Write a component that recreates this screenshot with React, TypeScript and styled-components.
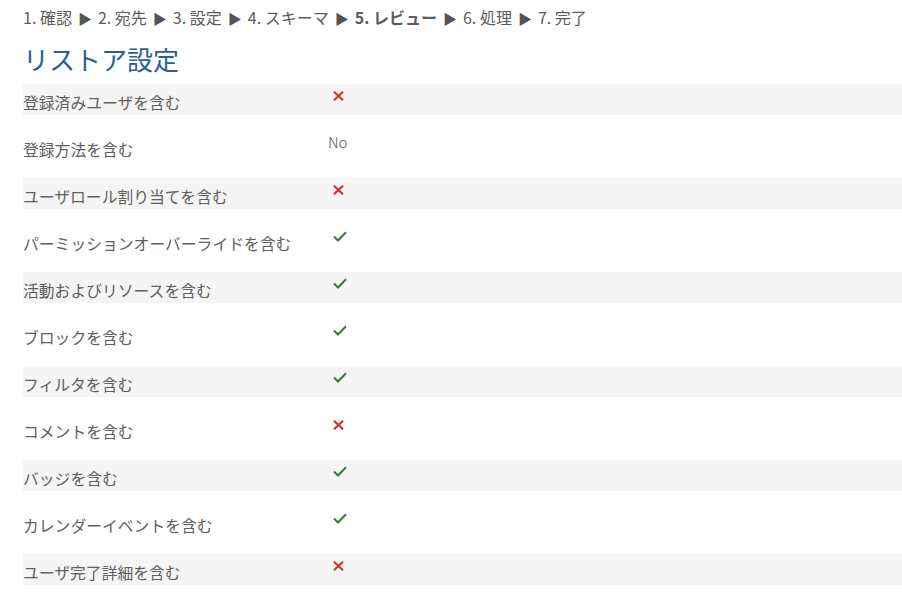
import React from 'react';
import styled, { createGlobalStyle } from 'styled-components';

type Value = 'yes' | 'no' | 'text';

interface Setting {
  label: string;
  value: Value;
  text?: string;
}

const settings: Setting[] = [
  { label: '登録済みユーザを含む', value: 'no' },
  { label: '登録方法を含む', value: 'text', text: 'No' },
  { label: 'ユーザロール割り当てを含む', value: 'no' },
  { label: 'パーミッションオーバーライドを含む', value: 'yes' },
  { label: '活動およびリソースを含む', value: 'yes' },
  { label: 'ブロックを含む', value: 'yes' },
  { label: 'フィルタを含む', value: 'yes' },
  { label: 'コメントを含む', value: 'no' },
  { label: 'バッジを含む', value: 'yes' },
  { label: 'カレンダーイベントを含む', value: 'yes' },
  { label: 'ユーザ完了詳細を含む', value: 'no' },
];

const steps = ['1. 確認', '2. 宛先', '3. 設定', '4. スキーマ', '5. レビュー', '6. 処理', '7. 完了'];
const current = 4;

const GlobalStyle = createGlobalStyle`
  body {
    margin: 0;
    background: #fff;
    font-family: "Noto Sans CJK JP", "Noto Sans", sans-serif;
    color: #5c5c5c;
  }
`;

const Page = styled.div`
  padding: 6px 0 0 23px;
`;

const Progress = styled.div`
  font-size: 16px;
  line-height: 22px;
  color: #5c5c5c;
  white-space: nowrap;
`;

const Step = styled.span<{ $current?: boolean }>`
  font-weight: ${(p) => (p.$current ? 700 : 400)};
`;

const Arrow = styled.span`
  color: #555;
  font-size: 14px;
  margin: 0 6px;
`;

const Title = styled.h2`
  margin: 14px 0 9px;
  font-size: 26px;
  font-weight: 400;
  line-height: 32px;
  color: #2c5e93;
`;

const Row = styled.div<{ $striped: boolean }>`
  display: flex;
  align-items: flex-start;
  height: 31px;
  margin-bottom: 16px;
  background: ${(p) => (p.$striped ? '#f5f5f5' : 'transparent')};
`;

const Label = styled.div`
  width: 305px;
  padding-top: 8px;
  font-size: 15.8px;
  line-height: 22px;
  color: #606060;
  white-space: nowrap;
`;

const ValueCell = styled.div`
  font-size: 15px;
  font-weight: 300;
  line-height: 22px;
  color: #4f5b6b;
`;

const IconWrap = styled.div`
  padding: 7px 0 0 5px;
  display: flex;
`;

const Cross = () => (
  <svg width="11" height="10" viewBox="0 0 11 10">
    <path d="M1 0.8 L10 9.2 M10 0.8 L1 9.2" stroke="#c9302c" strokeWidth="2.1" fill="none" />
  </svg>
);

const Check = () => (
  <svg width="14" height="11" viewBox="0 0 14 11" style={{ marginTop: -1 }}>
    <path d="M1 5.5 L5 9.5 L13 1.2" stroke="#357a38" strokeWidth="2" fill="none" />
  </svg>
);

const App = () => {
  return (
    <Page>
      <GlobalStyle />
      <Progress>
        {steps.map((s, i) => (
          <React.Fragment key={s}>
            <Step $current={i === current}>{s}</Step>
            {i < steps.length - 1 && <Arrow>▶</Arrow>}
          </React.Fragment>
        ))}
      </Progress>
      <Title>リストア設定</Title>
      {settings.map((s, i) => (
        <Row key={s.label} $striped={i % 2 === 0}>
          <Label>{s.label}</Label>
          <ValueCell>
            {s.value === 'text' ? (
              s.text
            ) : (
              <IconWrap>{s.value === 'yes' ? <Check /> : <Cross />}</IconWrap>
            )}
          </ValueCell>
        </Row>
      ))}
    </Page>
  );
};

export default App;
